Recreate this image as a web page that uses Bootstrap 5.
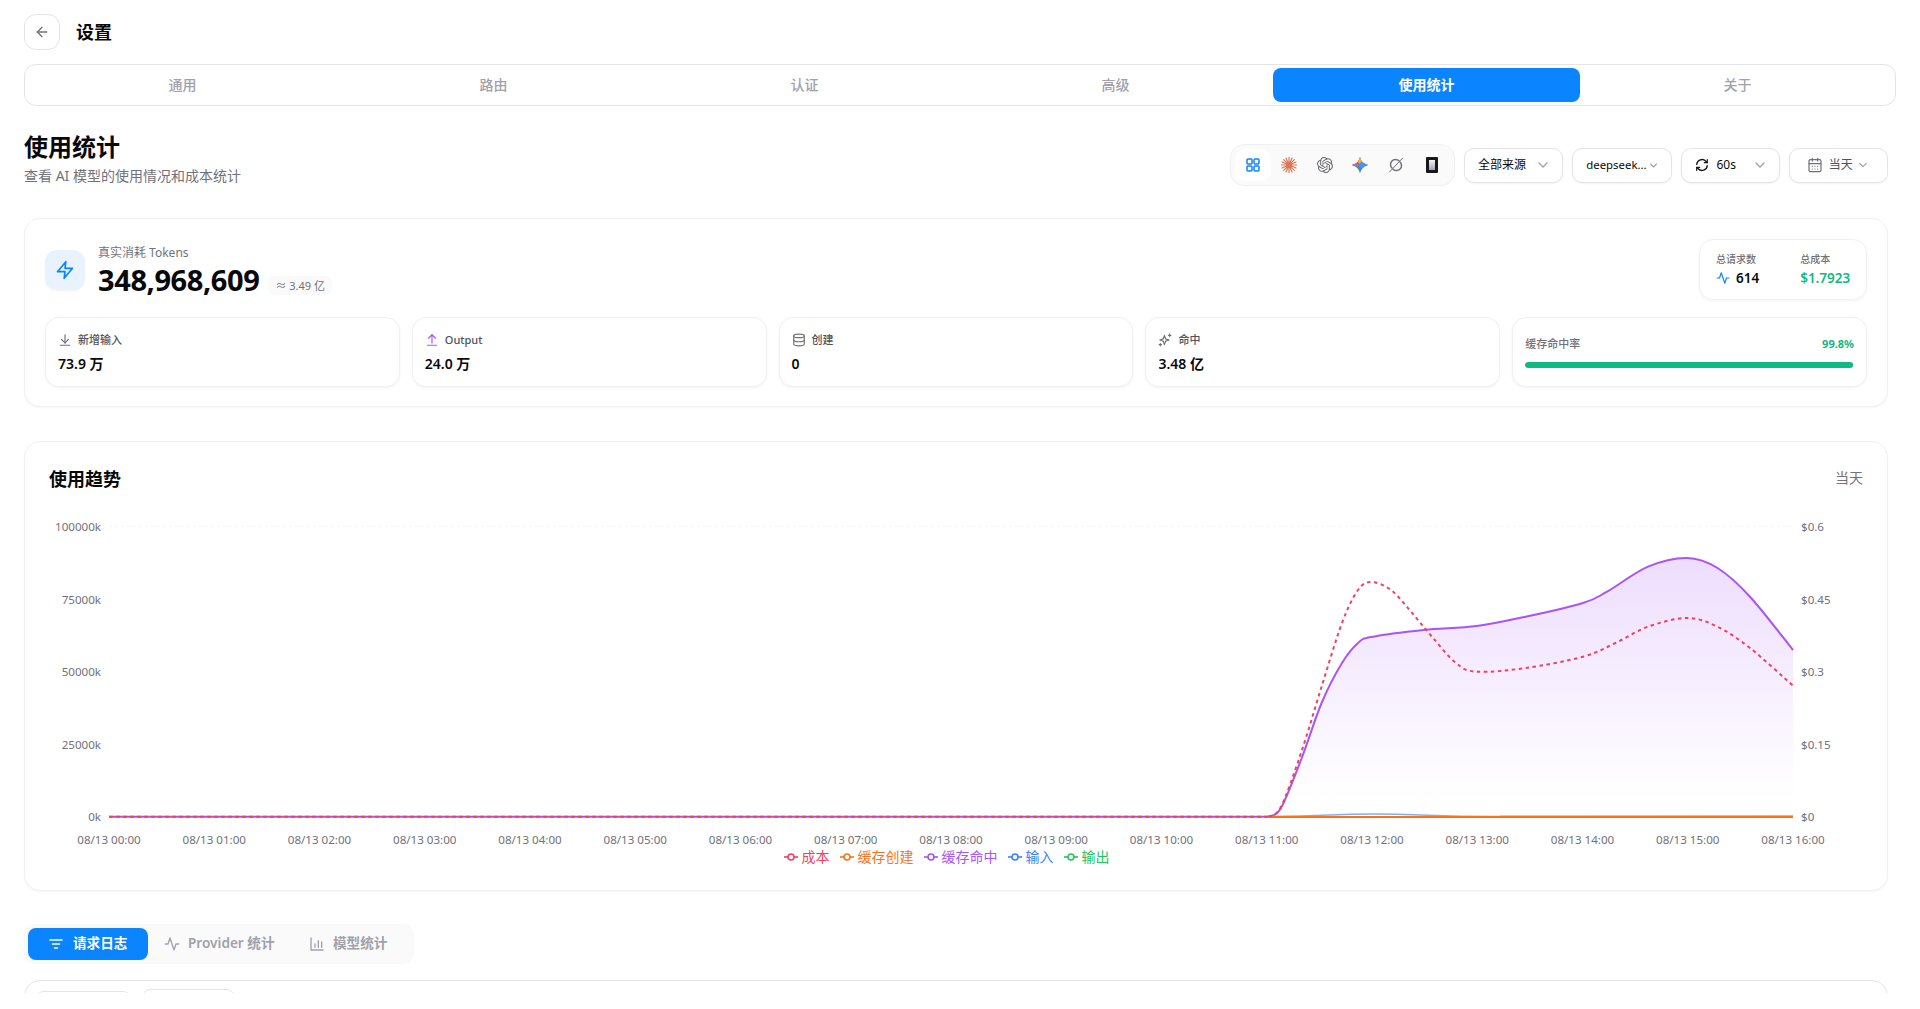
<!DOCTYPE html>
<html lang="zh-CN">
<head>
<meta charset="utf-8">
<title>设置</title>
<link href="https://cdn.jsdelivr.net/npm/bootstrap@5.3.0/dist/css/bootstrap.min.css" rel="stylesheet">
<style>
html,body{height:1009px;overflow:hidden;background:#fff}
body{font-family:"Noto Sans","Noto Sans CJK SC",sans-serif;color:#09090b;font-size:14px}
.shell{height:993px;overflow:hidden;padding:14px 24px 0 24px}
.back-btn{width:36px;height:36px;border:1px solid #e4e4e7;border-radius:12px;background:#fff;color:#71717a;padding:0}
.page-title{font-size:18px;font-weight:700;line-height:36px;margin:0 0 0 16px}
.tabs-bar{height:42px;border:1px solid #e4e4e7;border-radius:12px;padding:3px 4px;margin-top:14px;display:grid;grid-template-columns:repeat(6,1fr);gap:4px}
.tabs-bar .nav-link{padding:0;height:34px;line-height:34px;text-align:center;font-size:14px;font-weight:500;color:#a1a1aa;border-radius:8px}
.tabs-bar .nav-link.active{background:#0a84ff;color:#fff;font-weight:700}
.pane{margin-right:8px}
.sect-head{margin-top:25px;margin-bottom:32px}
.sect-title{font-size:24px;font-weight:700;line-height:32px;margin:0 0 3px}
.sect-sub{font-size:14px;line-height:20px;color:#71717a;margin:0}
.tool-row{gap:9px}
.icon-box{width:225px;height:42px;background:#fafafa;border:1px solid #f0f0f2;border-radius:14px;padding:4px}
.icon-tab{width:36px;height:32px;border-radius:10px;border:0;background:transparent;padding:0}
.icon-tab.active{background:#fff}
.sel-btn{width:99.25px;height:35px;padding:0 13px;background:#fff;border:1px solid #e4e4e7;border-radius:10px;font-size:12px;color:#09090b;box-shadow:0 1px 2px rgba(0,0,0,.05)}
.sel-btn.muted{color:#52525b;padding:0 19px 0 17px}
.sel-compact{font-size:11.4px}
.refresh-gap{gap:8px}
.cal-gap{gap:6px}
.chev{color:#a1a1aa;flex:none}
.panel{border:1px solid #f1f1f3;border-radius:16px;background:#fff;box-shadow:0 1px 2px rgba(0,0,0,.04)}
.usage-panel{height:189px;padding:20px}
.bolt-box{width:40px;height:40px;border-radius:12px;background:#e8f3ff;color:#0a84ff;box-shadow:0 1px 2px rgba(0,0,0,.05)}
.usage-gap{gap:13px}
.usage-text{padding-top:4px}
.usage-label{font-size:12px;line-height:16px;color:#71717a}
.usage-num{font-size:29px;font-weight:700;line-height:36px;letter-spacing:-.4px;margin-top:1px}
.approx{font-size:11px;line-height:19px;padding:0 7px;background:#fafafa;border-radius:7px;color:#71717a;margin-left:9px;margin-top:11px}
.sum-box{height:61px;width:168px;border:1px solid #f1f1f3;border-radius:14px;padding:0 16px;box-shadow:0 1px 3px rgba(0,0,0,.05)}
.sum-label{font-size:10px;line-height:14px;color:#71717a;font-weight:500}
.sum-val{font-size:13.5px;line-height:20px;font-weight:600;margin-top:2px;gap:6px}
.sum-val.money{color:#10b981}
.sum-rule{width:1px;height:32px;background:#f1f1f3;margin:0 20px 0 21px}
.tile-grid{display:grid;grid-template-columns:repeat(5,1fr);gap:12px;margin-top:17px}
.tile{height:70px;border:1px solid #f1f1f3;border-radius:14px;padding:14px 12px 0;box-shadow:0 1px 3px rgba(0,0,0,.05);background:#fff}
.tile-label{font-size:11px;line-height:16px;color:#52525b;font-weight:500;gap:6px}
.tile-val{font-size:14px;line-height:20px;font-weight:600;margin-top:6px}
.rate-head{font-size:11px;line-height:16px;color:#71717a;font-weight:500;margin-top:4px}
.rate-val{color:#10b981;font-weight:700}
.rate-bar{height:6px;margin-top:10px;border-radius:3px;background:#e4e4e7}
.rate-bar .progress-bar{background:#10b981;border-radius:3px}
.trend-panel{height:450px;margin-top:34px;padding:25px 0 0}
.trend-head{padding:0 24px;height:24px;margin-bottom:19px}
.trend-title{font-size:18px;font-weight:700;line-height:24px;margin:0}
.trend-range{font-size:14px;line-height:20px;color:#71717a;margin-bottom:2px}
.trend-svg{display:block;width:100%;height:338px}
.trend-svg text{font-family:"Noto Sans","Noto Sans CJK SC",sans-serif;font-size:11.6px;fill:#71717a}
.legend-row{height:20px;padding-right:19px;gap:10px;font-size:14px;line-height:20px;margin-top:-1px}
.legend-item{gap:4px}
.c-rose{color:#f43f5e}.c-orange{color:#f97316}.c-purple{color:#a855f7}.c-blue{color:#3b82f6}.c-green{color:#22c55e}
.sub-tabs{width:390px;height:40px;margin-top:33px;padding:4px;background:#fafafa;border-radius:10px}
.sub-tab{height:32px;border:0;background:transparent;padding:0 0 1px 16px;font-size:13.6px;font-weight:600;color:#a1a1aa;gap:8px;border-radius:8px}
.sub-tab.active{width:120px;padding-left:20px;background:#0a84ff;color:#fff;font-weight:700;gap:9px}
.sub-tab.t2{width:145px}
.sub-tab.t3{width:116px}
.log-panel{height:120px;margin-top:16px;border:1px solid #e4e4e7;border-radius:16px;padding:10px 9px;gap:8px}
.ghost-a{width:99px;height:34px;border:1px solid #e4e4e7;border-radius:10px}
.ghost-b{width:95px;height:36px;border:1px solid #e4e4e7;border-radius:10px;margin-top:-2px}
</style>
</head>
<body>
<div class="shell">
  <div class="d-flex align-items-center">
    <button class="btn back-btn d-flex align-items-center justify-content-center" aria-label="返回">
      <svg width="16" height="16" viewBox="0 0 24 24" fill="none" stroke="currentColor" stroke-width="2" stroke-linecap="round" stroke-linejoin="round"><path d="M12 19l-7-7 7-7"/><path d="M19 12H5"/></svg>
    </button>
    <h1 class="page-title">设置</h1>
  </div>

  <nav class="nav nav-pills tabs-bar">
    <a class="nav-link" href="#">通用</a>
    <a class="nav-link" href="#">路由</a>
    <a class="nav-link" href="#">认证</a>
    <a class="nav-link" href="#">高级</a>
    <a class="nav-link active" href="#">使用统计</a>
    <a class="nav-link" href="#">关于</a>
  </nav>

  <div class="pane">
    <div class="d-flex justify-content-between align-items-end sect-head">
      <div>
        <h2 class="sect-title">使用统计</h2>
        <p class="sect-sub">查看 AI 模型的使用情况和成本统计</p>
      </div>
      <div class="d-flex align-items-center tool-row">
        <div class="icon-box d-flex align-items-center">
          <button class="icon-tab active d-flex align-items-center justify-content-center" aria-label="全部">
            <svg width="16" height="16" viewBox="0 0 16 16" fill="none" stroke="#0a84ff" stroke-width="1.5"><rect x="2" y="2" width="5" height="5" rx="1"/><rect x="9" y="2" width="5" height="5" rx="1"/><rect x="2" y="9" width="5" height="5" rx="1"/><rect x="9" y="9" width="5" height="5" rx="1"/></svg>
          </button>
          <button class="icon-tab d-flex align-items-center justify-content-center" aria-label="Claude">
            <svg width="16" height="16" viewBox="0 0 16 16" fill="none" stroke="#d97757" stroke-width="1.2" stroke-linecap="round"><path d="M8 .5v15M.5 8h15M2.7 2.7l10.6 10.6M13.3 2.7L2.7 13.3M5 1l6 14M11 1L5 15M1 5l14 6M15 5L1 11"/><circle cx="8" cy="8" r="1.8" fill="#d97757" stroke="none"/></svg>
          </button>
          <button class="icon-tab d-flex align-items-center justify-content-center" aria-label="OpenAI">
            <svg width="16" height="16" viewBox="0 0 24 24" fill="#6b6b70"><path d="M22.2819 9.8211a5.9847 5.9847 0 0 0-.5157-4.9108 6.0462 6.0462 0 0 0-6.5098-2.9A6.0651 6.0651 0 0 0 4.9807 4.1818a5.9847 5.9847 0 0 0-3.9977 2.9 6.0462 6.0462 0 0 0 .7427 7.0966 5.98 5.98 0 0 0 .511 4.9107 6.051 6.051 0 0 0 6.5146 2.9001A5.9847 5.9847 0 0 0 13.2599 24a6.0557 6.0557 0 0 0 5.7718-4.2058 5.9894 5.9894 0 0 0 3.9977-2.9001 6.0557 6.0557 0 0 0-.7475-7.0729zm-9.022 12.6081a4.4755 4.4755 0 0 1-2.8764-1.0408l.1419-.0804 4.7783-2.7582a.7948.7948 0 0 0 .3927-.6813v-6.7369l2.02 1.1686a.071.071 0 0 1 .038.052v5.5826a4.504 4.504 0 0 1-4.4945 4.4944zm-9.6607-4.1254a4.4708 4.4708 0 0 1-.5346-3.0137l.142.0852 4.783 2.7582a.7712.7712 0 0 0 .7806 0l5.8428-3.3685v2.3324a.0804.0804 0 0 1-.0332.0615L9.74 19.9502a4.4992 4.4992 0 0 1-6.1408-1.6464zM2.3408 7.8956a4.485 4.485 0 0 1 2.3655-1.9728V11.6a.7664.7664 0 0 0 .3879.6765l5.8144 3.3543-2.0201 1.1685a.0757.0757 0 0 1-.071 0l-4.8303-2.7865A4.504 4.504 0 0 1 2.3408 7.872zm16.5963 3.8558L13.1038 8.364 15.1192 7.2a.0757.0757 0 0 1 .071 0l4.8303 2.7913a4.4944 4.4944 0 0 1-.6765 8.1042v-5.6772a.79.79 0 0 0-.407-.667zm2.0107-3.0231l-.142-.0852-4.7735-2.7818a.7759.7759 0 0 0-.7854 0L9.409 9.2297V6.8974a.0662.0662 0 0 1 .0284-.0615l4.8303-2.7866a4.4992 4.4992 0 0 1 6.6802 4.66zM8.3065 12.863l-2.02-1.1638a.0804.0804 0 0 1-.038-.0567V6.0742a4.4992 4.4992 0 0 1 7.3757-3.4537l-.142.0805L8.704 5.459a.7948.7948 0 0 0-.3927.6813zm1.0976-2.3654l2.602-1.4998 2.6069 1.4998v2.9994l-2.5974 1.4997-2.6067-1.4997Z"/></svg>
          </button>
          <button class="icon-tab d-flex align-items-center justify-content-center" aria-label="Gemini">
            <svg width="16" height="16" viewBox="0 0 16 16"><clipPath id="gemClip"><path d="M8 0C8.6 4.6 11.4 7.4 16 8 11.4 8.6 8.6 11.4 8 16 7.4 11.4 4.6 8.6 0 8 4.6 7.4 7.4 4.6 8 0Z" transform="translate(8 8) scale(1.12) translate(-8 -8)"/></clipPath><g clip-path="url(#gemClip)"><rect width="8" height="8" fill="#ea4335"/><rect x="8" width="8" height="8" fill="#4285f4"/><rect y="8" width="8" height="8" fill="#34a853"/><rect x="8" y="8" width="8" height="8" fill="#3b82f6"/><path d="M8 0l2 5-2 3-2-3z" fill="#fbbc04"/><path d="M0 8l5-2 3 2-3 2z" fill="#9b72cb"/><circle cx="10" cy="8" r="3" fill="#4f8ff7"/></g></svg>
          </button>
          <button class="icon-tab d-flex align-items-center justify-content-center" aria-label="Grok">
            <svg width="16" height="16" viewBox="0 0 16 16" fill="none" stroke="#71717a" stroke-width="1.5" stroke-linecap="round"><path d="M11 3.8A5 5 0 0 0 4 11"/><path d="M5 12.2A5 5 0 0 0 12 5"/><path d="M1.5 15L14.5 1.2" stroke-width="1"/></svg>
          </button>
          <button class="icon-tab d-flex align-items-center justify-content-center" aria-label="Cursor">
            <svg width="12" height="16" viewBox="0 0 12 16"><defs><linearGradient id="curGrad" x1="0" y1="0" x2="0" y2="1"><stop offset="0" stop-color="#f4f4f5"/><stop offset="1" stop-color="#a1a1aa"/></linearGradient></defs><rect width="12" height="16" rx="1" fill="#18181b"/><rect x="3" y="3" width="6" height="10" fill="url(#curGrad)"/></svg>
          </button>
        </div>
        <button class="sel-btn d-flex align-items-center justify-content-between">
          <span>全部来源</span>
          <svg class="chev" width="12" height="12" viewBox="0 0 12 12" fill="none" stroke="currentColor" stroke-width="1.3" stroke-linecap="round" stroke-linejoin="round"><path d="M2 4l4 4 4-4"/></svg>
        </button>
        <button class="sel-btn d-flex align-items-center justify-content-between">
          <span class="sel-compact">deepseek...</span>
          <svg class="chev" width="9" height="9" viewBox="0 0 12 12" fill="none" stroke="currentColor" stroke-width="1.5" stroke-linecap="round" stroke-linejoin="round"><path d="M2 4l4 4 4-4"/></svg>
        </button>
        <button class="sel-btn d-flex align-items-center justify-content-between">
          <span class="d-flex align-items-center refresh-gap">
            <svg width="14" height="14" viewBox="0 0 24 24" fill="none" stroke="#18181b" stroke-width="2.2" stroke-linecap="round" stroke-linejoin="round"><path d="M3 11a9 9 0 0 1 15.5-5.5L21 8"/><path d="M21 3v5h-5"/><path d="M21 13a9 9 0 0 1-15.5 5.5L3 16"/><path d="M3 21v-5h5"/></svg>
            60s
          </span>
          <svg class="chev" width="12" height="12" viewBox="0 0 12 12" fill="none" stroke="currentColor" stroke-width="1.3" stroke-linecap="round" stroke-linejoin="round"><path d="M2 4l4 4 4-4"/></svg>
        </button>
        <button class="sel-btn muted d-flex align-items-center justify-content-between">
          <span class="d-flex align-items-center cal-gap">
            <svg width="16" height="16" viewBox="0 0 24 24" fill="none" stroke="#71717a" stroke-width="1.8" stroke-linecap="round" stroke-linejoin="round"><rect x="3" y="4" width="18" height="18" rx="2"/><path d="M8 2v4M16 2v4M3 10h18M8 14h.01M12 14h.01M16 14h.01M8 18h.01M12 18h.01M16 18h.01"/></svg>
            当天
          </span>
          <svg class="chev" width="10" height="10" viewBox="0 0 12 12" fill="none" stroke="currentColor" stroke-width="1.4" stroke-linecap="round" stroke-linejoin="round"><path d="M2 4l4 4 4-4"/></svg>
        </button>
      </div>
    </div>

    <section class="panel usage-panel">
      <div class="d-flex justify-content-between align-items-center">
        <div class="d-flex align-items-center usage-gap">
          <div class="bolt-box d-flex align-items-center justify-content-center">
            <svg width="20" height="20" viewBox="0 0 24 24" fill="none" stroke="currentColor" stroke-width="2" stroke-linecap="round" stroke-linejoin="round"><path d="M13 2L3 14h9l-1 8 10-12h-9l1-8z"/></svg>
          </div>
          <div class="usage-text">
            <div class="usage-label">真实消耗 Tokens</div>
            <div class="d-flex align-items-center">
              <span class="usage-num">348,968,609</span>
              <span class="approx">≈ 3.49 亿</span>
            </div>
          </div>
        </div>
        <div class="sum-box d-flex align-items-center">
          <div>
            <div class="sum-label">总请求数</div>
            <div class="sum-val d-flex align-items-center">
              <svg width="14" height="14" viewBox="0 0 24 24" fill="none" stroke="#0a84ff" stroke-width="2" stroke-linecap="round" stroke-linejoin="round"><path d="M22 12h-4l-3 9L9 3l-3 9H2"/></svg>
              614
            </div>
          </div>
          <div class="sum-rule"></div>
          <div>
            <div class="sum-label">总成本</div>
            <div class="sum-val money">$1.7923</div>
          </div>
        </div>
      </div>
      <div class="tile-grid">
        <div class="tile">
          <div class="tile-label d-flex align-items-center">
            <svg width="14" height="14" viewBox="0 0 24 24" fill="none" stroke="#71717a" stroke-width="2" stroke-linecap="round" stroke-linejoin="round"><path d="M12 3v14"/><path d="M6 11l6 6 6-6"/><path d="M4 21h16"/></svg>
            <span>新增输入</span>
          </div>
          <div class="tile-val">73.9 万</div>
        </div>
        <div class="tile">
          <div class="tile-label d-flex align-items-center">
            <svg width="14" height="14" viewBox="0 0 24 24" fill="none" stroke="#a855f7" stroke-width="2" stroke-linecap="round" stroke-linejoin="round"><path d="M12 17V3"/><path d="M6 9l6-6 6 6"/><path d="M4 21h16"/></svg>
            <span>Output</span>
          </div>
          <div class="tile-val">24.0 万</div>
        </div>
        <div class="tile">
          <div class="tile-label d-flex align-items-center">
            <svg width="14" height="14" viewBox="0 0 24 24" fill="none" stroke="#71717a" stroke-width="2" stroke-linecap="round" stroke-linejoin="round"><ellipse cx="12" cy="5" rx="9" ry="3"/><path d="M3 5v14c0 1.7 4 3 9 3s9-1.3 9-3V5"/><path d="M3 12c0 1.7 4 3 9 3s9-1.3 9-3"/></svg>
            <span>创建</span>
          </div>
          <div class="tile-val">0</div>
        </div>
        <div class="tile">
          <div class="tile-label d-flex align-items-center">
            <svg width="14" height="14" viewBox="0 0 24 24" fill="none" stroke="#71717a" stroke-width="2" stroke-linecap="round" stroke-linejoin="round"><path d="M11 4l2 6 6 2-6 2-2 6-2-6-6-2 6-2z"/><path d="M20 2v4M18 4h4M4 18v4M2 20h4"/></svg>
            <span>命中</span>
          </div>
          <div class="tile-val">3.48 亿</div>
        </div>
        <div class="tile">
          <div class="rate-head d-flex justify-content-between">
            <span>缓存命中率</span><span class="rate-val">99.8%</span>
          </div>
          <div class="progress rate-bar"><div class="progress-bar" style="width:99.8%"></div></div>
        </div>
      </div>
    </section>

    <section class="panel trend-panel">
      <div class="trend-head d-flex justify-content-between align-items-center">
        <h3 class="trend-title">使用趋势</h3>
        <span class="trend-range">当天</span>
      </div>
      <svg class="trend-svg" viewBox="25 510 1862 338" preserveAspectRatio="none">
        <defs>
          <linearGradient id="areaGrad" x1="0" y1="558" x2="0" y2="800" gradientUnits="userSpaceOnUse">
            <stop offset="0" stop-color="#a855f7" stop-opacity=".2"/>
            <stop offset="1" stop-color="#a855f7" stop-opacity="0"/>
          </linearGradient>
        </defs>
        <line x1="109" y1="526.5" x2="1793" y2="526.5" stroke="#f4f4f5" stroke-dasharray="3 3"/>
        <g text-anchor="end">
          <text x="101" y="530.5">100000k</text>
          <text x="101" y="604">75000k</text>
          <text x="101" y="676">50000k</text>
          <text x="101" y="749">25000k</text>
          <text x="101" y="821">0k</text>
        </g>
        <g>
          <text x="1801" y="530.5">$0.6</text>
          <text x="1801" y="604">$0.45</text>
          <text x="1801" y="676">$0.3</text>
          <text x="1801" y="749">$0.15</text>
          <text x="1801" y="821">$0</text>
        </g>
        <g text-anchor="middle">
          <text x="109" y="844">08/13 00:00</text>
          <text x="214.25" y="844">08/13 01:00</text>
          <text x="319.5" y="844">08/13 02:00</text>
          <text x="424.75" y="844">08/13 03:00</text>
          <text x="530" y="844">08/13 04:00</text>
          <text x="635.25" y="844">08/13 05:00</text>
          <text x="740.5" y="844">08/13 06:00</text>
          <text x="845.75" y="844">08/13 07:00</text>
          <text x="951" y="844">08/13 08:00</text>
          <text x="1056.25" y="844">08/13 09:00</text>
          <text x="1161.5" y="844">08/13 10:00</text>
          <text x="1266.75" y="844">08/13 11:00</text>
          <text x="1372" y="844">08/13 12:00</text>
          <text x="1477.25" y="844">08/13 13:00</text>
          <text x="1582.5" y="844">08/13 14:00</text>
          <text x="1687.75" y="844">08/13 15:00</text>
          <text x="1793" y="844">08/13 16:00</text>
        </g>
        <path id="areaPath" fill="url(#areaGrad)"/>
        <path d="M1268 816.7 Q1300 816 1330 815 Q1372 813 1420 815 Q1460 816.5 1500 816.5 L1793 816.2" fill="none" stroke="#3b82f6" stroke-width="1.6" stroke-opacity=".65"/>
        <line x1="1500" y1="815.6" x2="1793" y2="815.6" stroke="#22c55e" stroke-width="1" stroke-opacity=".3"/>
        <line x1="109" y1="816.7" x2="1268.6" y2="816.7" stroke="#a855f7" stroke-width="2"/>
        <path id="purplePath" fill="none" stroke="#a855f7" stroke-width="2"/>
        <line x1="1268.6" y1="816.9" x2="1793" y2="816.9" stroke="#f97316" stroke-width="2"/>
        <line x1="109" y1="816.7" x2="1268.6" y2="816.7" stroke="#f43f5e" stroke-width="2" stroke-dasharray="4 3"/>
        <path id="rosePath" fill="none" stroke="#f43f5e" stroke-width="2" stroke-dasharray="3.5 3.5"/>
      </svg>
      <div class="legend-row d-flex justify-content-center align-items-center">
        <span class="legend-item d-flex align-items-center c-rose"><svg width="14" height="14" viewBox="0 0 14 14" fill="none" stroke="currentColor" stroke-width="1.6"><path d="M0 7h14"/><circle cx="7" cy="7" r="3" fill="#fff"/></svg>成本</span>
        <span class="legend-item d-flex align-items-center c-orange"><svg width="14" height="14" viewBox="0 0 14 14" fill="none" stroke="currentColor" stroke-width="1.6"><path d="M0 7h14"/><circle cx="7" cy="7" r="3" fill="#fff"/></svg>缓存创建</span>
        <span class="legend-item d-flex align-items-center c-purple"><svg width="14" height="14" viewBox="0 0 14 14" fill="none" stroke="currentColor" stroke-width="1.6"><path d="M0 7h14"/><circle cx="7" cy="7" r="3" fill="#fff"/></svg>缓存命中</span>
        <span class="legend-item d-flex align-items-center c-blue"><svg width="14" height="14" viewBox="0 0 14 14" fill="none" stroke="currentColor" stroke-width="1.6"><path d="M0 7h14"/><circle cx="7" cy="7" r="3" fill="#fff"/></svg>输入</span>
        <span class="legend-item d-flex align-items-center c-green"><svg width="14" height="14" viewBox="0 0 14 14" fill="none" stroke="currentColor" stroke-width="1.6"><path d="M0 7h14"/><circle cx="7" cy="7" r="3" fill="#fff"/></svg>输出</span>
      </div>
    </section>

    <div class="sub-tabs d-flex align-items-center">
      <button class="sub-tab active d-flex align-items-center">
        <svg width="16" height="16" viewBox="0 0 16 16" fill="none" stroke="currentColor" stroke-width="1.6" stroke-linecap="round"><path d="M2 4h12M4.5 8h7M6.5 12h3"/></svg>
        请求日志
      </button>
      <button class="sub-tab t2 d-flex align-items-center">
        <svg width="16" height="16" viewBox="0 0 24 24" fill="none" stroke="currentColor" stroke-width="2" stroke-linecap="round" stroke-linejoin="round"><path d="M22 12h-4l-3 9L9 3l-3 9H2"/></svg>
        Provider 统计
      </button>
      <button class="sub-tab t3 d-flex align-items-center">
        <svg width="16" height="16" viewBox="0 0 24 24" fill="none" stroke="currentColor" stroke-width="2" stroke-linecap="round"><path d="M3 3v18h18"/><path d="M9 17v-5M14 17V7M19 17v-8"/></svg>
        模型统计
      </button>
    </div>

    <section class="log-panel d-flex">
      <div class="ghost-a"></div>
      <div class="ghost-b"></div>
    </section>
  </div>
</div>
<script>
function smooth(p){
  var d="M"+p[0][0]+" "+p[0][1];
  for(var i=0;i<p.length-1;i++){
    var a=p[i-1]||p[i],b=p[i],c=p[i+1],e=p[i+2]||c;
    d+=" C"+(b[0]+(c[0]-a[0])/6).toFixed(1)+" "+(b[1]+(c[1]-a[1])/6).toFixed(1)+" "+(c[0]-(e[0]-b[0])/6).toFixed(1)+" "+(c[1]-(e[1]-b[1])/6).toFixed(1)+" "+c[0]+" "+c[1];
  }
  return d;
}
var purple=[[1268.6,816.7],[1281,808],[1301,760],[1321.6,703],[1342,663],[1358,643],[1371.4,637],[1423.7,630],[1476.7,626],[1525.7,616.7],[1583,603],[1607,591.7],[1648,566.7],[1687,558],[1717.5,568],[1750,596.7],[1793,650]];
var rose=[[1268.6,816.7],[1281,806.7],[1301,753],[1321.6,686.7],[1342,623],[1358,590],[1371.4,582],[1391,590],[1411,611.7],[1432,636.7],[1456,663],[1476.7,671.7],[1525.7,668],[1583,656.7],[1615.5,643],[1648,626.7],[1687,618],[1717.5,626.7],[1750,648],[1793,685.7]];
document.getElementById("purplePath").setAttribute("d",smooth(purple));
document.getElementById("rosePath").setAttribute("d",smooth(rose));
document.getElementById("areaPath").setAttribute("d",smooth(purple)+" L1793 816.7 L1268.6 816.7 Z");
</script>
<script src="https://cdn.jsdelivr.net/npm/bootstrap@5.3.0/dist/js/bootstrap.bundle.min.js"></script>
</body>
</html>
